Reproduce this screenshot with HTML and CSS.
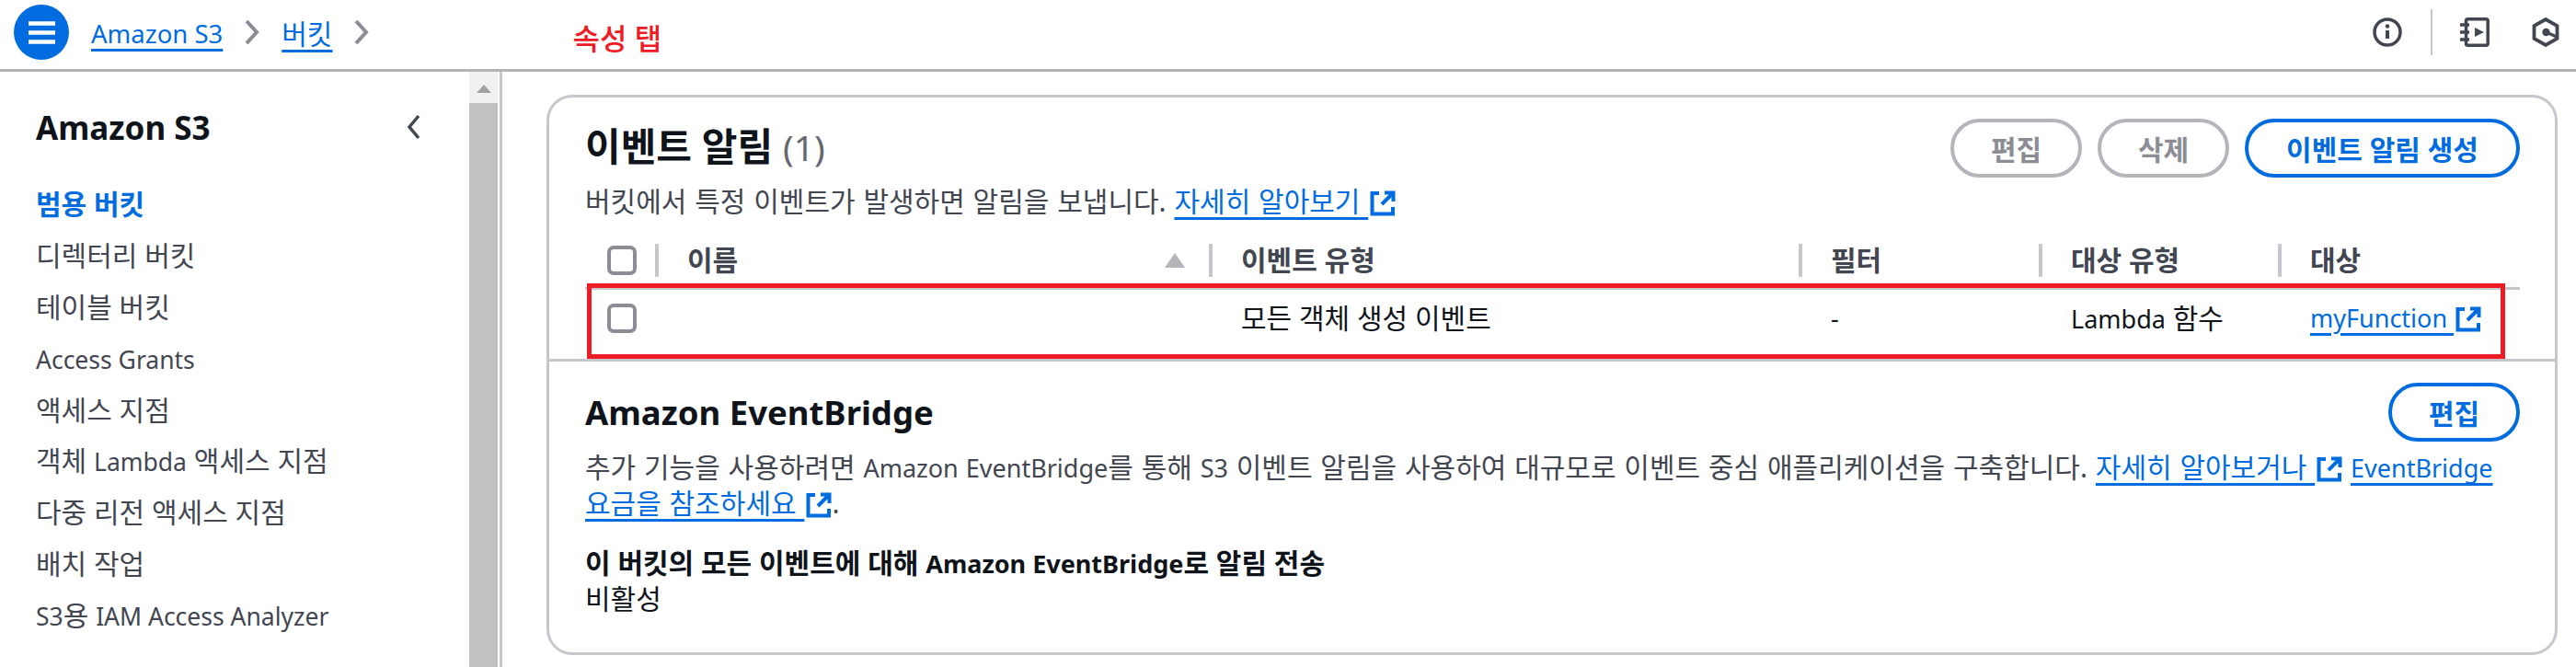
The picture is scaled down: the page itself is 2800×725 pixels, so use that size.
FILE: index.html
```html
<!DOCTYPE html>
<html lang="ko">
<head>
  <meta charset="utf-8">
  <title>Amazon S3</title>
  <link rel="stylesheet" href="styles.css">
</head>
<body>
  <header class="topbar">
    <button class="menu-button" aria-label="menu">
      <svg viewBox="0 0 29 25" width="29" height="25"><path d="M0 2.500h29M0 12.500h29M0 22.500h29" stroke="#fff" stroke-width="4.500" fill="none"/></svg>
    </button>
    <nav class="crumbs">
      <a href="#"><span class="lat">Amazon S3</span></a>
      <svg class="crumb-arrow" viewBox="0 0 16 26" width="16" height="26"><path d="M2 1l11 12L2 25" stroke="#8c8c94" stroke-width="4" fill="none"/></svg>
      <a href="#">버킷</a>
      <svg class="crumb-arrow" viewBox="0 0 16 26" width="16" height="26"><path d="M2 1l11 12L2 25" stroke="#8c8c94" stroke-width="4" fill="none"/></svg>
    </nav>
    <span class="note">속성 탭</span>
    <div class="tools">
      <svg viewBox="0 0 32 32" width="32" height="32"><circle cx="16" cy="16" r="14" stroke="#424650" stroke-width="3.500" fill="none"/><path d="M16 14v9" stroke="#424650" stroke-width="4"/><circle cx="16" cy="9.500" r="2.200" fill="#424650"/></svg>
      <span class="tool-sep"></span>
      <svg class="tool-book" viewBox="0 0 32 32" width="32" height="32"><rect x="6.500" y="1.800" width="23.700" height="28.400" rx="2" stroke="#424650" stroke-width="3.500" fill="none"/><path d="M0 8h10M0 16h10M0 24h10" stroke="#424650" stroke-width="3.500"/><path d="M16 11l10 5-10 5z" fill="#424650"/></svg>
      <svg viewBox="0 0 30 32" width="30" height="32"><path d="M15 2l12.500 7v14L15 30 2.500 23V9z" stroke="#424650" stroke-width="3.800" fill="none"/><circle cx="15.500" cy="16" r="4.200" fill="#424650"/><path d="M15.500 16L27 21" stroke="#424650" stroke-width="3.500"/></svg>
    </div>
  </header>

  <div class="main">
    <aside class="sidebar">
      <div class="side-head">
        <h2>Amazon S3</h2>
        <svg viewBox="0 0 16 28" width="16" height="28"><path d="M13 2L3 14l10 12" stroke="#424650" stroke-width="3.500" fill="none"/></svg>
      </div>
      <ul class="side-nav">
        <li class="active">범용 버킷</li>
        <li>디렉터리 버킷</li>
        <li>테이블 버킷</li>
        <li><span class="lat">Access Grants</span></li>
        <li>액세스 지점</li>
        <li>객체 <span class="lat">Lambda</span> 액세스 지점</li>
        <li>다중 리전 액세스 지점</li>
        <li>배치 작업</li>
        <li><span class="lat">S3</span>용 <span class="lat">IAM Access Analyzer</span></li>
      </ul>
    </aside>
    <div class="scrollbar">
      <div class="scroll-up"><span class="scroll-arrow"></span></div>
      <div class="scroll-thumb"></div>
    </div>

    <main class="content">
      <section class="card">
        <div class="card-top">
          <div class="card-head">
            <div>
              <h2 class="card-title">이벤트 알림 <span class="count">(1)</span></h2>
              <p class="desc">버킷에서 특정 이벤트가 발생하면 알림을 보냅니다. <a href="#">자세히 알아보기 </a><svg class="ext" viewBox="0 0 28 28" width="28" height="28"><path d="M10 3H2.500v22.500H25V18M16 2.500h9.500V12M25 3L13 15" stroke="#006ce0" stroke-width="4" fill="none"/></svg></p>
            </div>
            <div class="actions">
              <button class="btn off">편집</button>
              <button class="btn off">삭제</button>
              <button class="btn wide">이벤트 알림 생성</button>
            </div>
          </div>

          <div class="table">
            <div class="row th">
              <div class="c-check"><span class="box"></span></div>
              <div class="cell">이름<span class="sort"></span></div>
              <div class="cell">이벤트 유형</div>
              <div class="cell">필터</div>
              <div class="cell">대상 유형</div>
              <div class="cell">대상</div>
            </div>
            <div class="row td">
              <div class="c-check"><span class="box"></span></div>
              <div class="cell"></div>
              <div class="cell">모든 객체 생성 이벤트</div>
              <div class="cell"><span class="lat">-</span></div>
              <div class="cell"><span class="lat">Lambda</span> 함수</div>
              <div class="cell"><a href="#"><span class="lat">myFunction </span></a><svg class="ext" viewBox="0 0 28 28" width="28" height="28"><path d="M10 3H2.500v22.500H25V18M16 2.500h9.500V12M25 3L13 15" stroke="#006ce0" stroke-width="4" fill="none"/></svg></div>
            </div>
            <div class="red-box"></div>
          </div>
        </div>

        <div class="bridge">
          <div class="bridge-head">
            <h3>Amazon EventBridge</h3>
            <button class="btn">편집</button>
          </div>
          <p class="desc">추가 기능을 사용하려면 <span class="lat">Amazon EventBridge</span>를 통해 <span class="lat">S3</span> 이벤트 알림을 사용하여 대규모로 이벤트 중심 애플리케이션을 구축합니다. <a href="#">자세히 알아보거나 </a><svg class="ext" viewBox="0 0 28 28" width="28" height="28"><path d="M10 3H2.500v22.500H25V18M16 2.500h9.500V12M25 3L13 15" stroke="#006ce0" stroke-width="4" fill="none"/></svg> <a href="#"><span class="lat">EventBridge</span> 요금을 참조하세요 </a><svg class="ext" viewBox="0 0 28 28" width="28" height="28"><path d="M10 3H2.500v22.500H25V18M16 2.500h9.500V12M25 3L13 15" stroke="#006ce0" stroke-width="4" fill="none"/></svg>.</p>
          <div class="field-label">이 버킷의 모든 이벤트에 대해 <span class="lat">Amazon EventBridge</span>로 알림 전송</div>
          <div class="field-value">비활성</div>
        </div>
      </section>
    </main>
  </div>
</body>
</html>
```

FILE: styles.css
```css
* {
  box-sizing: border-box;
}

html, body {
  margin: 0;
  height: 725px;
  overflow: hidden;
}

body {
  background: #fff;
  color: #0f141a;
  font-family: "Noto Sans", "Noto Sans CJK KR", sans-serif;
  font-size: 30px;
}

a {
  color: #006ce0;
  text-decoration: underline;
  text-decoration-thickness: 3px;
  text-underline-offset: 6px;
}

h2, h3, p, ul {
  margin: 0;
  padding: 0;
}

/* latin runs are set smaller than the hangul around them */
.lat {
  font-size: 27px;
}

/* top bar */
.topbar {
  display: flex;
  align-items: center;
  height: 78px;
  padding: 0 15px 5px;
  border-bottom: 3px solid #b4b4bb;
}

.menu-button {
  display: flex;
  align-items: center;
  justify-content: center;
  width: 60px;
  height: 60px;
  padding: 0;
  border: none;
  border-radius: 50%;
  background: #006ce0;
}

.crumbs {
  display: flex;
  align-items: center;
  gap: 24px;
  margin-left: 24px;
}

.crumbs .lat {
  font-size: 27.500px;
}

.note {
  margin-left: 221px;
  margin-top: 10px;
  color: #ed1c24;
  font-size: 32px;
  font-weight: 500;
}

.tools {
  display: flex;
  align-items: center;
  margin-left: auto;
  margin-right: 3px;
}

.tool-sep {
  width: 2px;
  height: 50px;
  margin: 0 30px 0 31px;
  background: #c6c6cd;
}

.tool-book {
  margin-right: 46px;
}

/* sidebar */
.main {
  display: flex;
  height: 647px;
}

.sidebar {
  width: 510px;
  padding: 36px 52px 0 39px;
}

.side-head {
  display: flex;
  align-items: center;
  justify-content: space-between;
  height: 48px;
}

.side-head h2 {
  font-size: 35px;
  font-weight: 700;
}

.side-nav {
  list-style: none;
  margin-top: 32px;
  color: #424650;
}

.side-nav li {
  height: 55.900px;
  line-height: 56px;
}

.side-nav .lat {
  font-size: 26.500px;
}

.side-nav .active {
  color: #006ce0;
  font-weight: 700;
}

.scrollbar {
  display: flex;
  flex-direction: column;
  width: 31px;
  background: #f1f1f1;
}

.scroll-up {
  display: flex;
  justify-content: center;
  height: 34px;
  padding-top: 14px;
}

.scroll-arrow {
  width: 0;
  height: 0;
  border-left: 8px solid transparent;
  border-right: 8px solid transparent;
  border-bottom: 9px solid #a3a3a3;
}

.scroll-thumb {
  flex: 1;
  background: #c1c1c1;
}

/* content */
.content {
  flex: 1;
  padding: 25px 20px 10px 48px;
  border-left: 3px solid #c6c6cd;
  margin-left: 2px;
}

.card {
  height: 609px;
  border: 3px solid #c6c6cd;
  border-radius: 28px;
}

.card-top {
  padding: 23px 38px 0 39px;
  border-bottom: 3px solid #c6c6cd;
}

.card-head {
  display: flex;
  justify-content: space-between;
  height: 134px;
}

.card-title {
  font-size: 42px;
  font-weight: 700;
  line-height: 60px;
}

.count {
  color: #656871;
  font-size: 39px;
  font-weight: 400;
}

.desc {
  color: #424650;
  line-height: 38px;
  word-spacing: 1px;
}

.card-head .desc {
  margin-top: 10px;
}

.ext {
  margin: 0 0 -5px 2px;
  vertical-align: baseline;
}

.actions {
  display: flex;
  gap: 17px;
}

.btn {
  width: 143px;
  height: 64px;
  padding: 0;
  border: 4px solid #006ce0;
  border-radius: 32px;
  background: #fff;
  color: #006ce0;
  font-family: inherit;
  font-size: 30px;
  font-weight: 700;
}

.btn.wide {
  width: 299px;
}

.btn.off {
  border-color: #b4b4bb;
  color: #8c8c94;
}

/* table */
.table {
  position: relative;
}

.row {
  display: grid;
  grid-template-columns: 76px 602px 641px 261px 260px 1fr;
  align-items: center;
}

.th {
  height: 52px;
  padding-bottom: 9px;
  border-bottom: 3px solid #c6c6cd;
  font-weight: 700;
  color: #424650;
}

.th .cell {
  position: relative;
  display: flex;
  align-items: center;
  height: 36px;
  padding: 0 0 4px 31px;
  border-left: 4px solid #c6c6cd;
}

.td {
  height: 75px;
  padding-bottom: 13px;
}

.td .cell {
  padding-left: 35px;
  margin-bottom: 4px;
}

.c-check {
  display: flex;
  padding-left: 24px;
}

.box {
  width: 32px;
  height: 32px;
  border: 4px solid #8c8c94;
  border-radius: 7px;
  background: #fff;
}

.sort {
  position: absolute;
  right: 26px;
  top: 10px;
  width: 0;
  height: 0;
  border-left: 11px solid transparent;
  border-right: 11px solid transparent;
  border-bottom: 16px solid #b4b4bb;
}

.red-box {
  position: absolute;
  top: 45px;
  left: 2px;
  width: 2085px;
  height: 82px;
  border: 5px solid #ed1c24;
}

/* eventbridge */
.bridge {
  padding: 23px 38px 0 39px;
}

.bridge-head {
  display: flex;
  align-items: flex-start;
  justify-content: space-between;
  height: 73px;
}

.bridge-head h3 {
  font-size: 36.500px;
  font-weight: 700;
  line-height: 64px;
}

.bridge .desc {
  padding-right: 20px;
}

.field-label {
  margin-top: 27px;
  font-weight: 700;
  line-height: 38px;
}

.field-value {
  line-height: 38px;
}
```
